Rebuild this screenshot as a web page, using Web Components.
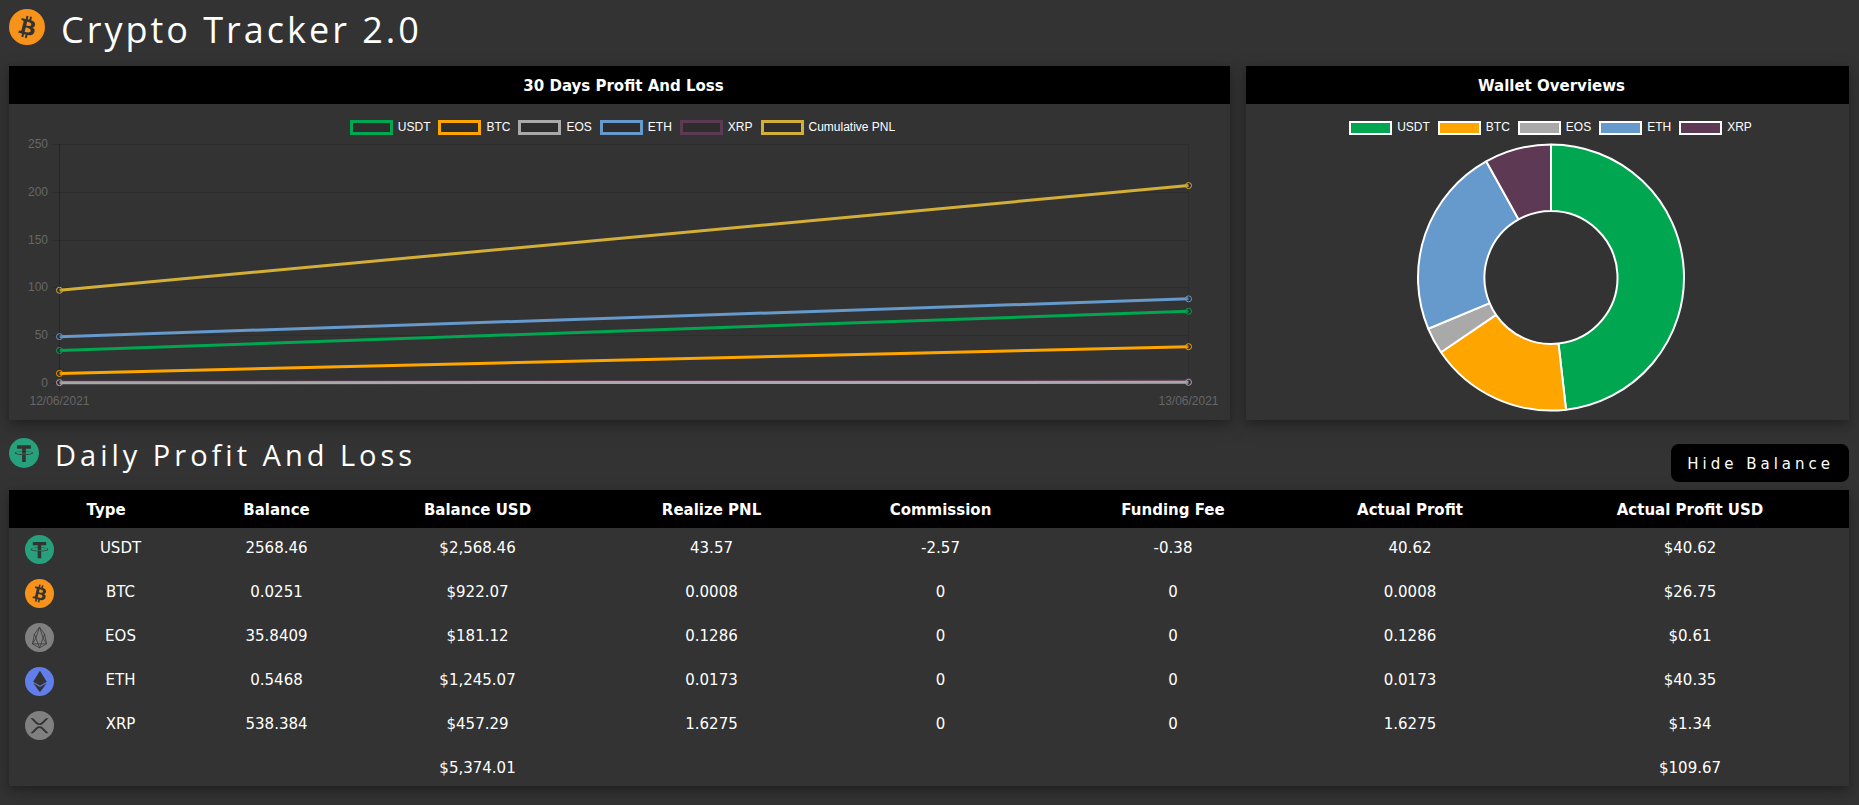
<!DOCTYPE html>
<html lang="en">
<head>
<meta charset="utf-8">
<meta name="viewport" content="width=device-width, initial-scale=1">
<title>Crypto Tracker 2.0</title>
<style>
  body { margin: 0; background: #333; color: #fff; font-family: "DejaVu Sans", Verdana, sans-serif; font-size: 15px; line-height: 18px; }
</style>
</head>
<body>
<crypto-app></crypto-app>
<script>
const COLORS = { USDT: '#00a650', BTC: '#ffa500', EOS: '#a9a9a9', ETH: '#6699cc', XRP: '#5d3954', 'Cumulative PNL': '#d4af37' };

/* Coin marks on a 32 unit grid: disc colour and the mark laid over it */
const DARK = '#333';
const COINS = {
  USDT: ['#26a17b', `<path fill="${DARK}" d="M17.922 17.383v-.002c-.11.008-.677.042-1.942.042-1.01 0-1.721-.03-1.971-.042v.003c-3.888-.171-6.79-.848-6.79-1.658 0-.809 2.902-1.486 6.79-1.66v2.644c.254.018.982.061 1.988.061 1.207 0 1.812-.05 1.925-.06v-2.643c3.88.173 6.775.85 6.775 1.658 0 .81-2.895 1.485-6.775 1.657m0-3.59v-2.366h5.414V7.819H8.595v3.608h5.414v2.365c-4.4.202-7.709 1.074-7.709 2.118 0 1.044 3.309 1.915 7.709 2.118v7.582h3.913v-7.584c4.393-.202 7.694-1.073 7.694-2.116 0-1.043-3.301-1.914-7.694-2.117"/>`],
  BTC: ['#f7931a', `<path fill="${DARK}" fill-rule="evenodd" d="M23.189 14.02c.314-2.096-1.283-3.223-3.465-3.975l.708-2.84-1.728-.43-.69 2.765c-.454-.114-.92-.22-1.385-.326l.695-2.783L15.596 6l-.708 2.839c-.376-.086-.746-.17-1.104-.26l.002-.009-2.384-.595-.46 1.846s1.283.294 1.256.312c.7.175.826.638.805 1.006l-.806 3.235c.048.012.11.03.18.057l-.183-.045-1.13 4.532c-.086.212-.303.531-.793.41.018.025-1.256-.313-1.256-.313l-.858 1.978 2.25.561c.418.105.828.215 1.231.318l-.715 2.872 1.727.43.708-2.84c.472.127.93.245 1.378.357l-.706 2.828 1.728.43.715-2.866c2.948.558 5.164.333 6.097-2.333.752-2.146-.037-3.385-1.588-4.192 1.13-.26 1.98-1.003 2.207-2.538zm-3.95 5.538c-.533 2.147-4.148.986-5.32.695l.95-3.805c1.172.293 4.929.872 4.37 3.11zm.535-5.569c-.487 1.953-3.495.96-4.47.717l.86-3.45c.975.243 4.118.696 3.61 2.733z"/>`],
  EOS: ['#808080', `<path fill="none" stroke="${DARK}" stroke-width=".8" stroke-linejoin="round" d="M16 4.600l-5.600 7.600L8.200 23 16 27.400 23.800 23l-2.200-10.800zM16 4.600l-4 12L8.200 23h15.600L20 16.600zM10.400 12.200L12 16.600l4 10.800 4-10.800 1.600-4.400"/>`],
  ETH: ['#627eea', `<path fill="${DARK}" d="M16.498 4L9 16.220l7.498 4.353 7.497-4.353zM9 17.616l7.498 10.379L24 17.616l-7.502 4.352z"/>`],
  XRP: ['#808080', `<path fill="${DARK}" d="M23.07 8h2.89l-6.015 5.957a5.621 5.621 0 01-7.89 0L6.035 8H8.93l4.57 4.523a3.556 3.556 0 004.996 0L23.07 8zM8.895 24.563H6l6.055-5.993a5.621 5.621 0 017.89 0L26 24.563h-2.895L18.500 20a3.556 3.556 0 00-4.996 0l-4.610 4.563z"/>`]
};

class CoinIcon extends HTMLElement {
  connectedCallback() {
    const [disc, mark] = COINS[this.getAttribute('coin')];
    this.attachShadow({ mode: 'open' }).innerHTML = `
      <style>
        :host { display: block; flex: none; width: var(--coin-size, 30px); height: var(--coin-size, 30px); }
        svg { display: block; width: 100%; height: 100%; }
      </style>
      <svg viewBox="0 0 32 32" aria-hidden="true"><circle cx="16" cy="16" r="16" fill="${disc}"/>${mark}</svg>`;
  }
}
customElements.define('coin-icon', CoinIcon);

class PanelCard extends HTMLElement {
  constructor() {
    super();
    this.attachShadow({ mode: 'open' }).innerHTML = `
      <style>
        :host { display: block; min-width: 0; background: #333; box-shadow: 0 4px 8px 0 rgba(0,0,0,.2), 0 6px 20px 0 rgba(0,0,0,.19); }
        header { background: #000; padding: 11px 0 9px 8px; text-align: center; font-weight: bold; }
        ::slotted(h2) { margin: 0; font-size: 15px; line-height: 18px; }
        .body { padding: 16px 0 8px 6px; }
      </style>
      <header><slot name="title"></slot></header>
      <div class="body"><slot></slot></div>`;
  }
}
customElements.define('panel-card', PanelCard);

class ChartLegend extends HTMLElement {
  connectedCallback() {
    const solid = this.hasAttribute('solid');
    const items = this.getAttribute('items').split(',');
    this.attachShadow({ mode: 'open' }).innerHTML = `
      <style>
        :host { display: block; }
        ul { display: flex; justify-content: center; align-items: center; gap: 8px; height: 15px; margin: 0; padding: 0; list-style: none; font: 12px/14px "Liberation Sans", Arial, sans-serif; }
        li { display: flex; align-items: center; gap: 5px; white-space: nowrap; }
        i { box-sizing: border-box; width: 43px; height: 15px; border: 3px solid var(--c); background: rgba(0,0,0,.1); }
        i.solid { height: 14px; border: 2px solid #fff; background: var(--c); }
        span { padding-bottom: 2px; }
      </style>
      <ul>${items.map(n => `<li><i class="${solid ? 'solid' : ''}" style="--c:${COLORS[n]}"></i><span>${n}</span></li>`).join('')}</ul>`;
  }
}
customElements.define('chart-legend', ChartLegend);

const SVG_STYLE = `<style>
  :host { display: block; }
  svg { display: block; width: 100%; height: auto; }
  text { font: 12px "Liberation Sans", Arial, sans-serif; fill: #666; }
</style>`;

class PnlChart extends HTMLElement {
  connectedCallback() {
    const left = 44.5, right = 1173.5, zero = 248, unit = 0.956;
    const y = v => zero - v * unit;
    const series = [
      ['Cumulative PNL', 97, 206.5], ['XRP', 1, 2], ['ETH', 48.5, 88],
      ['BTC', 10, 38], ['USDT', 34, 75], ['EOS', .3, .7]
    ];
    const rows = [250, 200, 150, 100, 50, 0].map(v => {
      const gy = Math.round(y(v)) + .5;
      return `<path class="g" d="M${left - 8} ${gy}H${right}"/><text x="33" y="${gy + 3}" text-anchor="end">${v}</text>`;
    }).join('');
    const cols = [[left, '12/06/2021'], [right, '13/06/2021']].map(([x, t], i) =>
      `<path class="g${i ? '' : ' axis'}" d="M${x} 9V256"/><text x="${x}" y="270" text-anchor="middle">${t}</text>`).join('');
    const lines = series.map(([n, a, b]) =>
      `<path d="M${left} ${y(a)}L${right} ${y(b)}" stroke="${COLORS[n]}" stroke-width="3" fill="none"/>` +
      [[left, a], [right, b]].map(([x, v]) => `<circle cx="${x}" cy="${y(v)}" r="3" stroke="${COLORS[n]}" fill="rgba(0,0,0,.1)"/>`).join('')).join('');
    this.attachShadow({ mode: 'open' }).innerHTML = `${SVG_STYLE}
      <style>.g { stroke: rgba(0,0,0,.1); fill: none; } .axis { stroke: rgba(0,0,0,.25); }</style>
      <svg viewBox="0 0 1215 277" role="img" aria-label="Profit and loss per coin">${rows}${cols}${lines}</svg>`;
  }
}
customElements.define('pnl-chart', PnlChart);

class WalletChart extends HTMLElement {
  connectedCallback() {
    const cx = 299, cy = 142.5, R = 133, r = 66.5;
    const share = { USDT: 48.2, BTC: 17.3, EOS: 3.2, ETH: 23.2, XRP: 8.1 };
    const pt = (rad, f) => `${cx + rad * Math.sin(f * 2 * Math.PI)} ${cy - rad * Math.cos(f * 2 * Math.PI)}`;
    let at = 0;
    const arcs = Object.entries(share).map(([n, pct]) => {
      const a = at, b = at += pct / 100, big = b - a > .5 ? 1 : 0;
      return `<path fill="${COLORS[n]}" d="M${pt(R, a)}A${R} ${R} 0 ${big} 1 ${pt(R, b)}L${pt(r, b)}A${r} ${r} 0 ${big} 0 ${pt(r, a)}Z"/>`;
    }).join('');
    this.attachShadow({ mode: 'open' }).innerHTML = `${SVG_STYLE}
      <svg viewBox="0 0 597 277" role="img" aria-label="Wallet share per coin"><g stroke="#fff" stroke-width="2" stroke-linejoin="bevel">${arcs}</g></svg>`;
  }
}
customElements.define('wallet-chart', WalletChart);

class PnlTable extends HTMLElement {
  connectedCallback() {
    const heads = ['Balance', 'Balance USD', 'Realize PNL', 'Commission', 'Funding Fee', 'Actual Profit', 'Actual Profit USD'];
    const widths = [53, 141, 147, 255, 213, 245, 220, 254, 312];
    const data = [
      ['USDT', '2568.46', '$2,568.46', '43.57', '-2.57', '-0.38', '40.62', '$40.62'],
      ['BTC', '0.0251', '$922.07', '0.0008', '0', '0', '0.0008', '$26.75'],
      ['EOS', '35.8409', '$181.12', '0.1286', '0', '0', '0.1286', '$0.61'],
      ['ETH', '0.5468', '$1,245.07', '0.0173', '0', '0', '0.0173', '$40.35'],
      ['XRP', '538.384', '$457.29', '1.6275', '0', '0', '1.6275', '$1.34']
    ];
    this.attachShadow({ mode: 'open' }).innerHTML = `
      <style>
        :host { display: block; background: #333; box-shadow: 0 4px 8px 0 rgba(0,0,0,.2), 0 6px 20px 0 rgba(0,0,0,.19); --coin-size: 29px; }
        table { width: 100%; table-layout: fixed; border-collapse: collapse; text-align: center; }
        th, td { padding: 11px 0 9px; vertical-align: top; white-space: nowrap; }
        th:last-child, td:last-child { padding-right: 6px; }
        thead { background: #000; }
        td.icon { padding: 7px 0 8px 16px; }
        td.type { padding-right: 24px; }
      </style>
      <table>
        <colgroup>${widths.map(w => `<col style="width:${w}px">`).join('')}</colgroup>
        <thead><tr><th colspan="2" scope="col">Type</th>${heads.map(h => `<th scope="col">${h}</th>`).join('')}</tr></thead>
        <tbody>${data.map(([n, ...v]) => `<tr><td class="icon"><coin-icon coin="${n}"></coin-icon></td><td class="type">${n}</td>${v.map(c => `<td>${c}</td>`).join('')}</tr>`).join('')}</tbody>
        <tfoot><tr><td colspan="3"></td><td>$5,374.01</td><td colspan="4"></td><td>$109.67</td></tr></tfoot>
      </table>`;
  }
}
customElements.define('pnl-table', PnlTable);

class CryptoApp extends HTMLElement {
  connectedCallback() {
    this.attachShadow({ mode: 'open' }).innerHTML = `
      <style>
        :host { display: block; padding: 0 10px 19px 9px; }
        .title { display: flex; align-items: flex-start; gap: 16px; }
        .title h1, .title h2 { margin: 0; font-family: "Open Sans", "Segoe UI", sans-serif; font-weight: 400; }
        .top { padding: 9px 0; --coin-size: 36px; }
        .top h1 { font-size: 36px; line-height: 42px; margin-bottom: 6px; height: 42px; letter-spacing: 3px; }
        .charts { display: grid; grid-template-columns: 1221fr 603fr; gap: 16px; }
        .bar { display: flex; justify-content: space-between; align-items: flex-start; padding: 18px 0 8px; }
        .bar h2 { font-size: 29px; line-height: 34px; letter-spacing: 4px; }
        button { margin-top: 6px; padding: 11px 15px 9px 16px; border: 0; border-radius: 8px; background: #000; color: #fff; font: inherit; letter-spacing: 4px; cursor: pointer; }
      </style>
      <main>
        <div class="title top"><coin-icon coin="BTC"></coin-icon><h1>Crypto Tracker 2.0</h1></div>
        <div class="charts">
          <panel-card><h2 slot="title">30 Days Profit And Loss</h2>
            <chart-legend items="USDT,BTC,EOS,ETH,XRP,Cumulative PNL"></chart-legend><pnl-chart></pnl-chart></panel-card>
          <panel-card><h2 slot="title">Wallet Overviews</h2>
            <chart-legend solid items="USDT,BTC,EOS,ETH,XRP"></chart-legend><wallet-chart></wallet-chart></panel-card>
        </div>
        <div class="bar">
          <div class="title"><coin-icon coin="USDT"></coin-icon><h2>Daily Profit And Loss</h2></div>
          <button type="button">Hide Balance</button>
        </div>
        <pnl-table></pnl-table>
      </main>`;
  }
}
customElements.define('crypto-app', CryptoApp);
</script>
</body>
</html>
